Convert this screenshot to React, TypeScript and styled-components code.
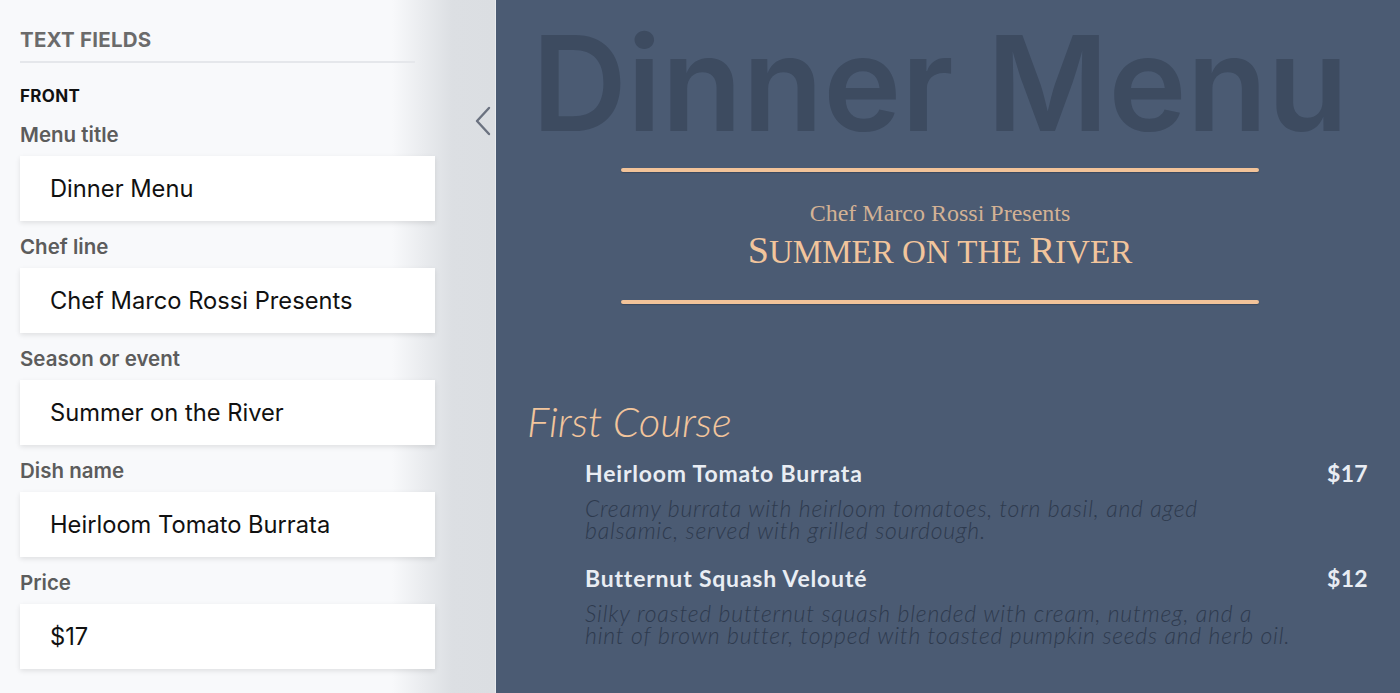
import React from 'react';
import styled, { createGlobalStyle } from 'styled-components';

const Global = createGlobalStyle`
  html, body { margin: 0; padding: 0; height: 100%; overflow: hidden; }
  #root { height: 100%; }
  * { box-sizing: border-box; }
`;

const Shell = styled.div`
  display: flex;
  width: 1400px;
  height: 693px;
  overflow: hidden;
`;

const Sidebar = styled.aside`
  width: 496px;
  flex: none;
  display: flex;
  background: linear-gradient(90deg, #f8f9fb 0, #f8f9fb 392px, #dcdfe3 452px, #dbdee2 100%);
  border-right: 1px solid #e9ebee;
`;

const Panel = styled.div`
  width: 440px;
  flex: none;
  padding: 28px 0 0 20px;
  display: flex;
  flex-direction: column;
  font-family: Inter, "Noto Sans", sans-serif;
`;

const PanelTitle = styled.h2`
  margin: 0;
  width: 395px;
  font-size: 20.5px;
  line-height: 24px;
  font-weight: 700;
  letter-spacing: 0.01em;
  color: #6b6b6b;
  text-transform: uppercase;
  padding-bottom: 9px;
  border-bottom: 2px solid #e5e7eb;
`;

const GroupTitle = styled.h3`
  margin: 23px 0 0;
  font-size: 17px;
  line-height: 20px;
  font-weight: 700;
  color: #111;
  letter-spacing: 0.02em;
`;

const FieldList = styled.div`
  display: flex;
  flex-direction: column;
  gap: 14px;
  margin-top: 17px;
`;

const Field = styled.label`
  display: flex;
  flex-direction: column;
  gap: 9px;
`;

const FieldLabel = styled.span`
  font-size: 20.5px;
  line-height: 24px;
  font-weight: 600;
  color: #5c5c5c;
`;

const Input = styled.input`
  width: 415px;
  height: 65px;
  border: none;
  outline: none;
  background: #fff;
  padding: 0 0 0 30px;
  font-family: Inter, "Noto Sans", sans-serif;
  font-size: 23.7px;
  color: #111;
  box-shadow: 0 2px 5px rgba(0, 0, 0, 0.1);
`;

const Rail = styled.div`
  flex: 1;
  padding: 106px 0 0 34px;
`;

const CollapseButton = styled.button`
  border: none;
  background: transparent;
  padding: 0;
  display: block;
  cursor: pointer;
  color: #6b7280;
`;

const Preview = styled.main`
  flex: 1;
  background: #4b5b73;
  padding: 17px 32px 0 31px;
  overflow: hidden;
  display: flex;
  flex-direction: column;
`;

const Header = styled.header`
  display: flex;
  flex-direction: column;
  align-items: center;
  margin-right: 15px;
`;

const BigTitle = styled.h1`
  margin: 0;
  font-family: Inter, "Noto Sans", sans-serif;
  font-weight: 600;
  font-size: 132px;
  line-height: 132px;
  color: #3d4b60;
  white-space: nowrap;
`;

const Rule = styled.div<{ $top: number }>`
  width: 638px;
  height: 4px;
  border-radius: 2px;
  background: #f2c399;
  box-shadow: 0 1px 1px rgba(30, 40, 55, 0.35);
  margin-top: ${p => p.$top}px;
`;

const ChefLine = styled.div`
  margin-top: 28px;
  font-family: "Liberation Serif", "DejaVu Serif", serif;
  font-size: 24px;
  line-height: 26px;
  color: #d3b295;
`;

const Season = styled.div`
  margin-top: 2px;
  font-family: "Liberation Serif", "DejaVu Serif", serif;
  text-transform: uppercase;
  font-size: 33px;
  line-height: 44px;
  color: #f2c59c;
  white-space: nowrap;
`;

const SeasonInitial = styled.span`
  font-size: 38px;
`;

const CourseTitle = styled.h2`
  margin: 93px 0 0;
  font-family: Lato, "Open Sans", sans-serif;
  font-style: italic;
  font-weight: 300;
  font-size: 42px;
  line-height: 48px;
  color: #f2c59c;
`;

const Items = styled.div`
  display: flex;
  flex-direction: column;
  gap: 23px;
  margin-top: 14px;
  padding-left: 58px;
`;

const Item = styled.div`
  display: flex;
  flex-direction: column;
  gap: 10px;
`;

const ItemHead = styled.div`
  display: flex;
  justify-content: space-between;
  align-items: center;
  font-family: Lato, "Open Sans", sans-serif;
  font-weight: 700;
  font-size: 23px;
  line-height: 28px;
  color: #e9edf3;
`;

const DishName = styled.span`
  letter-spacing: 0.8px;
`;

const Price = styled.span`
  letter-spacing: 0.3px;
`;

const Desc = styled.p`
  margin: 0;
  max-width: 708px;
  font-family: Lato, "Open Sans", sans-serif;
  font-style: italic;
  font-weight: 300;
  font-size: 23px;
  letter-spacing: 0.8px;
  line-height: 22px;
  color: #2e3a4e;
`;

function SmallCaps({ text }: { text: string }) {
  return (
    <>
      {text.split('').map((ch, i) =>
        ch !== ' ' && ch === ch.toUpperCase() ? <SeasonInitial key={i}>{ch}</SeasonInitial> : ch
      )}
    </>
  );
}

const fields = [
  { label: 'Menu title', value: 'Dinner Menu' },
  { label: 'Chef line', value: 'Chef Marco Rossi Presents' },
  { label: 'Season or event', value: 'Summer on the River' },
  { label: 'Dish name', value: 'Heirloom Tomato Burrata' },
  { label: 'Price', value: '$17' },
];

const dishes = [
  {
    name: 'Heirloom Tomato Burrata',
    price: '$17',
    desc: 'Creamy burrata with heirloom tomatoes, torn basil, and aged balsamic, served with grilled sourdough.',
  },
  {
    name: 'Butternut Squash Velouté',
    price: '$12',
    desc: 'Silky roasted butternut squash blended with cream, nutmeg, and a hint of brown butter, topped with toasted pumpkin seeds and herb oil.',
  },
];

export default function App() {
  return (
    <>
      <Global />
      <Shell>
        <Sidebar>
          <Panel>
            <PanelTitle>Text Fields</PanelTitle>
            <GroupTitle>FRONT</GroupTitle>
            <FieldList>
              {fields.map(f => (
                <Field key={f.label}>
                  <FieldLabel>{f.label}</FieldLabel>
                  <Input defaultValue={f.value} />
                </Field>
              ))}
            </FieldList>
          </Panel>
          <Rail>
            <CollapseButton aria-label="Collapse">
              <svg width="18" height="30" viewBox="0 0 18 30" fill="none">
                <polyline points="15,2 3,15 15,28" stroke="currentColor" strokeWidth="2.4" strokeLinecap="round" strokeLinejoin="round" />
              </svg>
            </CollapseButton>
          </Rail>
        </Sidebar>
        <Preview>
          <Header>
            <BigTitle>Dinner Menu</BigTitle>
            <Rule $top={19} />
            <ChefLine>Chef Marco Rossi Presents</ChefLine>
            <Season><SmallCaps text="Summer on the River" /></Season>
            <Rule $top={26} />
          </Header>
          <CourseTitle>First Course</CourseTitle>
          <Items>
            {dishes.map(d => (
              <Item key={d.name}>
                <ItemHead>
                  <DishName>{d.name}</DishName>
                  <Price>{d.price}</Price>
                </ItemHead>
                <Desc>{d.desc}</Desc>
              </Item>
            ))}
          </Items>
        </Preview>
      </Shell>
    </>
  );
}
